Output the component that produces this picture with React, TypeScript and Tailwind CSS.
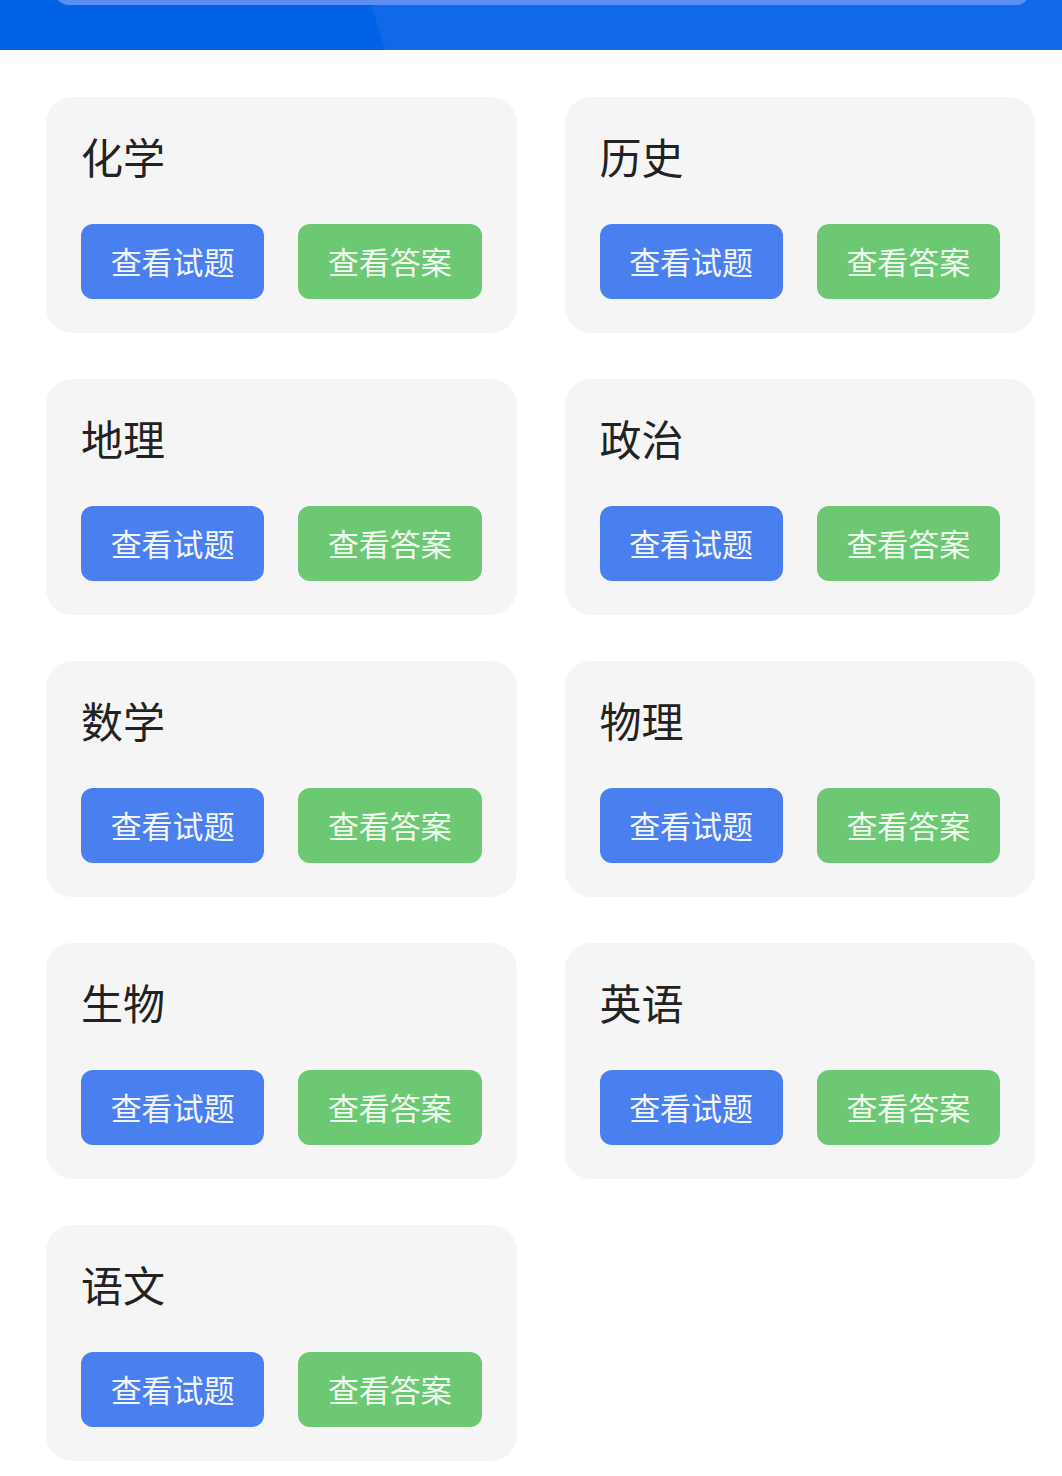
const subjects = ["化学", "历史", "地理", "政治", "数学", "物理", "生物", "英语", "语文"];

function SubjectCard({ name }: { name: string }) {
  return (
    <section className="h-[236px] rounded-[26px] bg-[#f5f5f5] px-[35px] pt-[33px]">
      <h2 className="h-[52px] text-[42px] leading-[52px] font-normal text-[#222222]">{name}</h2>
      <div className="mt-[42px] flex gap-[34px]">
        <button className="flex h-[75px] w-[184px] items-center justify-center rounded-[12px] bg-[#4a7ff0] text-[31px] text-[#f2f6ff]">
          查看试题
        </button>
        <button className="flex h-[75px] w-[184px] items-center justify-center rounded-[12px] bg-[#6dc874] text-[31px] text-[#eefaee]">
          查看答案
        </button>
      </div>
    </section>
  );
}

export default function App() {
  return (
    <div className="min-h-[1476px] bg-white font-['Noto_Sans_CJK_SC','Noto_Sans',sans-serif]">
      <header className="relative h-[50px] overflow-hidden bg-[#1168e8]">
        <div className="absolute left-0 top-0 h-full w-[385px] bg-[#0062e6] [clip-path:polygon(0_0,370px_0,385px_100%,0_100%)]" />
        <div className="absolute left-[55px] right-[32px] top-[-20px] h-[25px] rounded-b-[14px] bg-[#5a8ef5]" />
      </header>
      <main className="grid grid-cols-2 gap-x-[48px] gap-y-[46px] pl-[46px] pr-[27px] pt-[47px] pb-[40px]">
        {subjects.map((s) => (
          <SubjectCard key={s} name={s} />
        ))}
      </main>
    </div>
  );
}
